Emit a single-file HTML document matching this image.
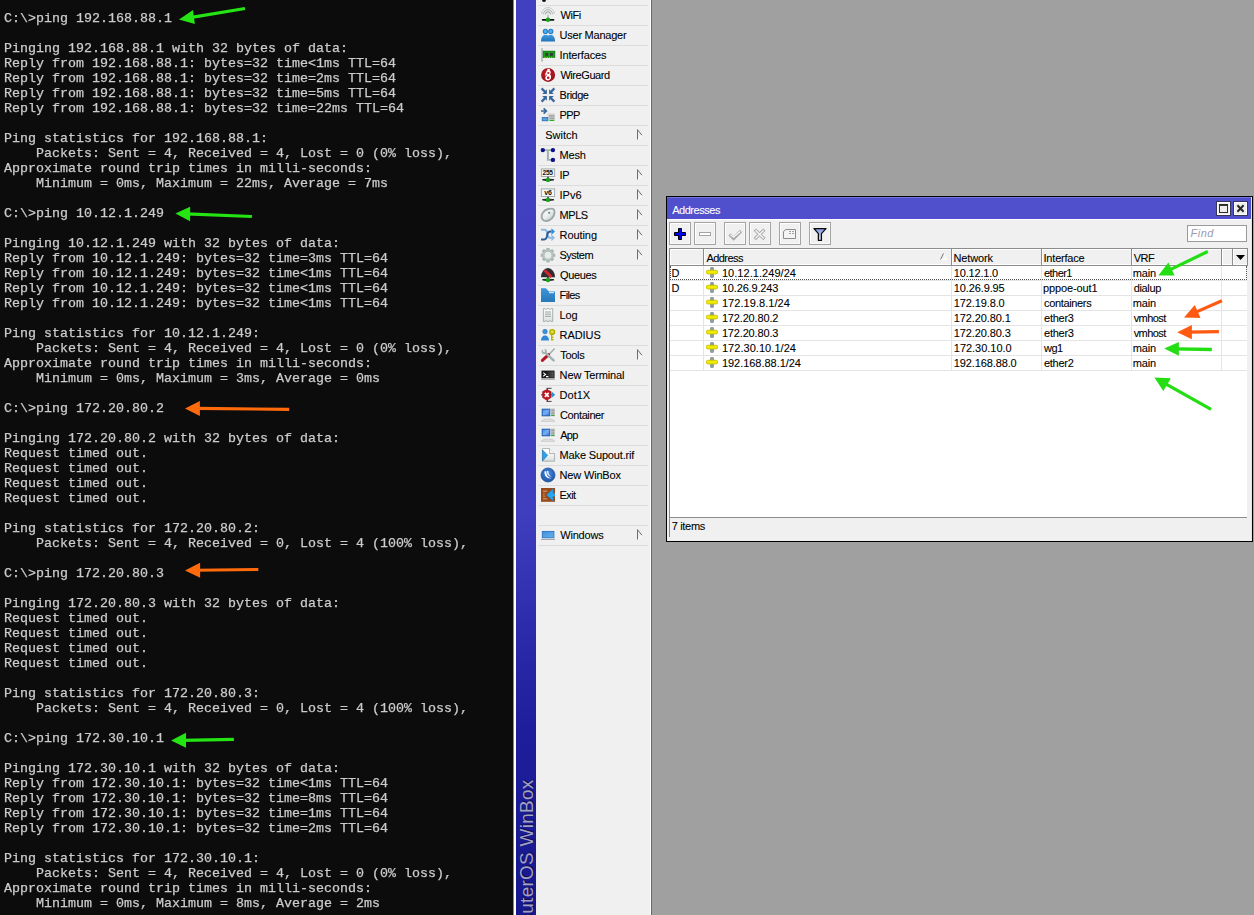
<!DOCTYPE html>
<html lang="en"><head><meta charset="utf-8"><title>ping / WinBox Addresses</title>
<style>
html,body{margin:0;padding:0;background:#a0a0a0}
body{width:1254px;height:915px;position:relative;overflow:hidden;background:#a0a0a0;font-family:"Liberation Sans",sans-serif;font-size:11px;color:#000;-webkit-text-stroke:0.09px #000}
#term{position:absolute;left:0;top:0;width:514px;height:915px;background:#0c0c0c;overflow:hidden}
#term pre{will-change:transform;position:absolute;left:4px;top:11px;margin:0;font-family:"Liberation Mono",monospace;font-size:13.333px;line-height:15px;color:#cccccc;white-space:pre;-webkit-text-stroke:0.25px #cccccc}
#wline{position:absolute;left:513px;top:0;width:3px;height:915px;background:linear-gradient(90deg,#8080c8 0,#8080c8 1px,#fffff8 1px)}
#bluebar{position:absolute;left:516px;top:0;width:20px;height:915px;background:linear-gradient(180deg,#4040c0 0,#3e3ebe 56%,#2c2cac 68%,#1e1e9c 80%,#17178e 100%);overflow:hidden}
#vtext{position:absolute;left:0;top:0;transform-origin:0 0;transform:translate(1px,938.5px) rotate(-90deg);letter-spacing:0.25px;font-size:19px;line-height:20px;height:20px;white-space:nowrap;color:#a2a2c0;-webkit-text-stroke:0;text-shadow:1px 1px 0 #0c0c54}
#menu{position:absolute;left:536px;top:0;width:114px;height:915px;background:#f0f0f0;overflow:hidden}
#menur{position:absolute;left:650px;top:0;width:2px;height:915px;background:linear-gradient(90deg,#fff 0,#fff 1px,#6a6a6a 1px)}
#work{position:absolute;left:652px;top:0;width:602px;height:915px;background:#a0a0a0}
.mi{position:absolute;left:2px;width:110px;height:20px;border-top:1px solid #dcdcdc;box-sizing:border-box}
.mi .ic{position:absolute;left:2px;top:1px;width:16px;height:16px;display:block}
.mi .ic svg{display:block}
.ml{position:absolute;top:2px;line-height:14px;font-size:11px;white-space:nowrap}
.sub{position:absolute;left:98px;top:3px}
.topdot{position:absolute;left:6px;top:-3px;width:4px;height:4.5px;border-radius:3px;background:#111}
#win{position:absolute;left:666px;top:196px;width:587px;height:346px;box-sizing:border-box;border:1px solid #000;background:#f0f0f0}
#title{position:absolute;left:0;top:0;width:584px;height:22px;background:#5050cc;border-top:1px solid #7474dc;box-sizing:border-box}
#ttext{position:absolute;top:5px;line-height:14px;color:#fff;font-size:11px;white-space:nowrap;-webkit-text-stroke:0.08px #fff}
#tline{position:absolute;left:0;top:22px;width:584px;height:1px;background:#fff}
#rstrip{position:absolute;left:584px;top:0;width:1px;height:344px;background:#e4e4e4}
.tb{position:absolute;top:3px;width:15px;height:15px;display:block}
.tb svg{display:block}
.btn{position:absolute;top:25px;width:22px;height:23px;box-sizing:border-box;border:1px solid #a4a4a4;background:#f0f0f0;box-shadow:inset 1px 1px 0 #fff,inset -1px -1px 0 #f8f8f8}
.btn svg{display:block;position:absolute;left:-1px;top:-1px}
#find{position:absolute;left:520px;top:28px;width:60px;height:17px;box-sizing:border-box;border:1px solid #9a9a9a;background:#fff}
#find i{position:absolute;top:1px;line-height:13px;color:#9a9ab0;font-size:11px;white-space:nowrap;-webkit-text-stroke:0}
#frame{position:absolute;left:2px;top:51px;width:579px;height:289px;box-sizing:border-box;border-left:1px solid #8c8c8c;border-top:1px solid #8c8c8c;background:#f0f0f0}
#thead{position:absolute;left:0;top:0;width:578px;height:16px;background:#f0f0f0;border-bottom:1px solid #8c8c8c}
.th{position:absolute;top:0;height:16px;box-sizing:border-box;border-right:1px solid #8c8c8c;box-shadow:inset 1px 1px 0 #fff,inset 0 -1px 0 #fff;overflow:hidden}
.tx{position:absolute;top:0;line-height:14px;font-size:11px;white-space:nowrap}
.th .tx{top:2px}
.sortm{position:absolute;left:270px;top:4px}
.dd{position:absolute;left:566px;top:6px}
#tbody{position:absolute;left:0;top:17px;width:577px;height:251px;background:#fff;border-bottom:1px solid #8c8c8c;overflow:hidden}
.tr{position:absolute;left:0;width:578px;height:15px;box-sizing:border-box;border-bottom:1px solid #e4e4e4}
.td{position:absolute;top:0;height:14px;box-sizing:border-box;border-right:1px solid #e4e4e4;overflow:hidden}
.td svg{position:absolute;left:2px;top:1px}
#sel{position:absolute;left:0;top:0;width:577px;height:14px;border:1px dotted #505050;border-top:0;box-sizing:border-box}
#status{position:absolute;left:0;top:269px;width:578px;height:19px}
#status .tx{top:1px;margin-left:0.5px}
#arrows{position:absolute;left:0;top:0;pointer-events:none}

</style></head>
<body>
<div id="term"><pre>C:\&gt;ping 192.168.88.1

Pinging 192.168.88.1 with 32 bytes of data:
Reply from 192.168.88.1: bytes=32 time&lt;1ms TTL=64
Reply from 192.168.88.1: bytes=32 time=2ms TTL=64
Reply from 192.168.88.1: bytes=32 time=5ms TTL=64
Reply from 192.168.88.1: bytes=32 time=22ms TTL=64

Ping statistics for 192.168.88.1:
    Packets: Sent = 4, Received = 4, Lost = 0 (0% loss),
Approximate round trip times in milli-seconds:
    Minimum = 0ms, Maximum = 22ms, Average = 7ms

C:\&gt;ping 10.12.1.249

Pinging 10.12.1.249 with 32 bytes of data:
Reply from 10.12.1.249: bytes=32 time=3ms TTL=64
Reply from 10.12.1.249: bytes=32 time&lt;1ms TTL=64
Reply from 10.12.1.249: bytes=32 time&lt;1ms TTL=64
Reply from 10.12.1.249: bytes=32 time&lt;1ms TTL=64

Ping statistics for 10.12.1.249:
    Packets: Sent = 4, Received = 4, Lost = 0 (0% loss),
Approximate round trip times in milli-seconds:
    Minimum = 0ms, Maximum = 3ms, Average = 0ms

C:\&gt;ping 172.20.80.2

Pinging 172.20.80.2 with 32 bytes of data:
Request timed out.
Request timed out.
Request timed out.
Request timed out.

Ping statistics for 172.20.80.2:
    Packets: Sent = 4, Received = 0, Lost = 4 (100% loss),

C:\&gt;ping 172.20.80.3

Pinging 172.20.80.3 with 32 bytes of data:
Request timed out.
Request timed out.
Request timed out.
Request timed out.

Ping statistics for 172.20.80.3:
    Packets: Sent = 4, Received = 0, Lost = 4 (100% loss),

C:\&gt;ping 172.30.10.1

Pinging 172.30.10.1 with 32 bytes of data:
Reply from 172.30.10.1: bytes=32 time&lt;1ms TTL=64
Reply from 172.30.10.1: bytes=32 time=8ms TTL=64
Reply from 172.30.10.1: bytes=32 time=1ms TTL=64
Reply from 172.30.10.1: bytes=32 time=2ms TTL=64

Ping statistics for 172.30.10.1:
    Packets: Sent = 4, Received = 4, Lost = 0 (0% loss),
Approximate round trip times in milli-seconds:
    Minimum = 0ms, Maximum = 8ms, Average = 2ms</pre></div>
<div id="wline"></div>
<div id="bluebar"><div id="vtext">RouterOS WinBox</div></div>
<div id="menu">
<div class="topdot"></div>
<div class="mi" style="top:5px"><span class="ic"><svg width="16" height="16" viewBox="0 0 16 16"><path d="M1.6 7A6.4 6.4 0 0 1 14.4 7" fill="none" stroke="#c4c8c8" stroke-width="1"/><path d="M3.5 7.2A4.5 4.5 0 0 1 12.5 7.2" fill="none" stroke="#a8b0b0" stroke-width="1"/><path d="M5.4 7.4A2.6 2.6 0 0 1 10.6 7.4" fill="none" stroke="#909898" stroke-width="1"/><rect x="7.4" y="7.5" width="1.2" height="4" fill="#a8b0b0"/><rect x="1.8" y="11.9" width="12.6" height="1.8" rx="0.9" fill="#111"/><circle cx="8" cy="12.8" r="2.2" fill="#12a812"/></svg></span><span class="ml" style="left:22.4px;letter-spacing:-0.37px">WiFi</span></div>
<div class="mi" style="top:25px"><span class="ic"><svg width="16" height="16" viewBox="0 0 16 16"><defs><linearGradient id="gu" x1="0" y1="0" x2="0" y2="1"><stop offset="0" stop-color="#3c9ce4"/><stop offset="1" stop-color="#2272b4"/></linearGradient></defs><path d="M1 14.6C1 10 3 7.8 5.4 7.8S8.2 9 8.1 9C8.1 9 8.4 7.8 10.7 7.8S15.1 10 15.1 14.6Z" fill="url(#gu)"/><circle cx="5.4" cy="4.4" r="2.1" fill="#48b0f0" stroke="#2a7cc4" stroke-width="1.1"/><circle cx="10.8" cy="4.4" r="2.1" fill="#48b0f0" stroke="#2a7cc4" stroke-width="1.1"/></svg></span><span class="ml" style="left:21.6px;letter-spacing:-0.25px">User Manager</span></div>
<div class="mi" style="top:45px"><span class="ic"><svg width="16" height="16" viewBox="0 0 16 16"><rect x="1.3" y="1.3" width="1.5" height="13.3" fill="#a8b2b2"/><rect x="3.2" y="4.2" width="11.6" height="6.3" fill="#12a012" stroke="#0a700a" stroke-width="0.8"/><rect x="5.4" y="6" width="2.6" height="2.8" fill="#3a3444"/><rect x="10" y="6" width="2.9" height="2.8" fill="#3a3444"/><path d="M4.5 10.6H14" stroke="#e8e020" stroke-width="0.9" stroke-dasharray="1 1.2"/></svg></span><span class="ml" style="left:21.6px;letter-spacing:-0.16px">Interfaces</span></div>
<div class="mi" style="top:65px"><span class="ic"><svg width="16" height="16" viewBox="0 0 16 16"><defs><radialGradient id="gw" cx="0.45" cy="0.4" r="0.6"><stop offset="0" stop-color="#c82028"/><stop offset="1" stop-color="#98101a"/></radialGradient></defs><circle cx="8.1" cy="7.9" r="7" fill="url(#gw)"/><path d="M7.2 1.9C9.6 1.6 10.6 2.8 9.6 3.6C11 4.4 11.2 6.4 9.9 7.4C11.8 8.6 11.6 12.8 8.2 13.4C5.2 13.6 4.6 10.6 6 9.2C4.8 8 5 6 6.4 5.2C6 4.2 6.6 3.4 7.6 3.2Z" fill="#fff"/><circle cx="8.3" cy="6" r="1.1" fill="#b81822"/><circle cx="8.2" cy="10.7" r="1.3" fill="#b81822"/><circle cx="6.4" cy="8" r="0.6" fill="#b81822"/></svg></span><span class="ml" style="left:22.4px;letter-spacing:-0.43px">WireGuard</span></div>
<div class="mi" style="top:85px"><span class="ic"><svg width="16" height="16" viewBox="0 0 16 16"><g><path d="M1.6 1.4L5.6 5.4" fill="none" stroke="#38689a" stroke-width="2.2"/><path d="M6.9 2.2V6.9H2.2Z" fill="#38689a"/></g><g transform="translate(16,0) scale(-1,1)"><path d="M1.6 1.4L5.6 5.4" fill="none" stroke="#38689a" stroke-width="2.2"/><path d="M6.9 2.2V6.9H2.2Z" fill="#38689a"/></g><g transform="translate(0,16) scale(1,-1)"><path d="M1.6 1.4L5.6 5.4" fill="none" stroke="#38689a" stroke-width="2.2"/><path d="M6.9 2.2V6.9H2.2Z" fill="#38689a"/></g><g transform="translate(16,16) scale(-1,-1)"><path d="M1.6 1.4L5.6 5.4" fill="none" stroke="#38689a" stroke-width="2.2"/><path d="M6.9 2.2V6.9H2.2Z" fill="#38689a"/></g></svg></span><span class="ml" style="left:21.6px;letter-spacing:-0.48px">Bridge</span></div>
<div class="mi" style="top:105px"><span class="ic"><svg width="16" height="16" viewBox="0 0 16 16"><path d="M1 4H6 M3.6 1.4L6.4 4L3.6 6.6" fill="none" stroke="#38689a" stroke-width="1.6"/><rect x="7.6" y="6.4" width="7.3" height="7.6" fill="#d4d4d4"/><rect x="9" y="8" width="5.4" height="1.6" fill="#a4a4a4"/><rect x="9.4" y="10.6" width="5" height="1" fill="#888"/><rect x="9.6" y="12.8" width="4.6" height="1.2" fill="#18b818"/><rect x="2.2" y="10.4" width="5.6" height="3.4" fill="#3a8ad0" stroke="#2a74bc" stroke-width="0.8"/><rect x="3.2" y="11.4" width="3.6" height="1.4" fill="#6ab0e8"/></svg></span><span class="ml" style="left:21.6px;letter-spacing:-0.65px">PPP</span></div>
<div class="mi" style="top:125px"><span class="ml" style="left:7.3px;letter-spacing:-0.02px">Switch</span><svg class="sub" width="7" height="12" viewBox="0 0 7 12"><path d="M6 6.6L2 10.4" stroke="#fff" stroke-width="1" fill="none"/><path d="M1.5 0.5V10.5 M1.5 0.8L6 6.2" stroke="#6c6c6c" stroke-width="1" fill="none"/></svg></div>
<div class="mi" style="top:145px"><span class="ic"><svg width="16" height="16" viewBox="0 0 16 16"><path d="M2.8 3.1H12.9 M7.9 3.1V12.9H12.9" fill="none" stroke="#a0b0b0" stroke-width="1.9"/><circle cx="2.8" cy="3.1" r="2.2" fill="#10108a"/><circle cx="12.9" cy="3.1" r="2.2" fill="#10108a"/><circle cx="12.9" cy="12.9" r="2.2" fill="#10108a"/></svg></span><span class="ml" style="left:21.6px;letter-spacing:-0.17px">Mesh</span></div>
<div class="mi" style="top:165px"><span class="ic"><svg width="16" height="16" viewBox="0 0 16 16"><rect x="1.4" y="1.9" width="13.2" height="7.6" fill="#f6f8f8" stroke="#a4acac" stroke-width="1"/><text x="2.6" y="8.2" font-family="Liberation Sans, sans-serif" font-weight="bold" font-size="6.6" letter-spacing="-0.3" fill="#111">255</text><rect x="7.3" y="9.8" width="1.4" height="2" fill="#222"/><path d="M2.4 12.8C5 12 11 12 14 12.8C11 13.8 5 13.8 2.4 12.8Z" fill="#111" stroke="#111" stroke-width="0.8"/><circle cx="8" cy="12.9" r="2.2" fill="#12a812"/></svg></span><span class="ml" style="left:21.6px;letter-spacing:-0.50px">IP</span><svg class="sub" width="7" height="12" viewBox="0 0 7 12"><path d="M6 6.6L2 10.4" stroke="#fff" stroke-width="1" fill="none"/><path d="M1.5 0.5V10.5 M1.5 0.8L6 6.2" stroke="#6c6c6c" stroke-width="1" fill="none"/></svg></div>
<div class="mi" style="top:185px"><span class="ic"><svg width="16" height="16" viewBox="0 0 16 16"><rect x="1.4" y="1.9" width="13.2" height="7.6" fill="#f6f8f8" stroke="#a4acac" stroke-width="1"/><text x="4.2" y="8.2" font-family="Liberation Sans, sans-serif" font-weight="bold" font-size="7" letter-spacing="0" fill="#111">v6</text><rect x="7.3" y="9.8" width="1.4" height="2" fill="#222"/><path d="M2.4 12.8C5 12 11 12 14 12.8C11 13.8 5 13.8 2.4 12.8Z" fill="#111" stroke="#111" stroke-width="0.8"/><circle cx="8" cy="12.9" r="2.2" fill="#12a812"/></svg></span><span class="ml" style="left:21.6px;letter-spacing:-0.03px">IPv6</span><svg class="sub" width="7" height="12" viewBox="0 0 7 12"><path d="M6 6.6L2 10.4" stroke="#fff" stroke-width="1" fill="none"/><path d="M1.5 0.5V10.5 M1.5 0.8L6 6.2" stroke="#6c6c6c" stroke-width="1" fill="none"/></svg></div>
<div class="mi" style="top:205px"><span class="ic"><svg width="16" height="16" viewBox="0 0 16 16"><defs><linearGradient id="gm" x1="0" y1="0" x2="1" y2="1"><stop offset="0" stop-color="#ffffff"/><stop offset="0.55" stop-color="#e6ecec"/><stop offset="1" stop-color="#aab6b6"/></linearGradient></defs><path d="M13 1.9C14.8 2.6 15 6 13.5 9.2C11.8 12.8 7.4 14.8 4.2 13.7C1.2 12.6 0.9 8.8 2.8 5.8C4.9 2.5 10 0.9 13 1.9Z" fill="url(#gm)" stroke="#9ca8a8" stroke-width="1.9"/><circle cx="9.2" cy="5.8" r="1.1" fill="#788484"/></svg></span><span class="ml" style="left:21.6px;letter-spacing:-0.47px">MPLS</span><svg class="sub" width="7" height="12" viewBox="0 0 7 12"><path d="M6 6.6L2 10.4" stroke="#fff" stroke-width="1" fill="none"/><path d="M1.5 0.5V10.5 M1.5 0.8L6 6.2" stroke="#6c6c6c" stroke-width="1" fill="none"/></svg></div>
<div class="mi" style="top:225px"><span class="ic"><svg width="16" height="16" viewBox="0 0 16 16"><path d="M1 2.8H4.6C7 2.8 7.2 5 7.4 7.6S8.6 11 11 11H11.6" fill="none" stroke="#8cb8e0" stroke-width="2"/><path d="M11.4 7.4L15 10.8L11.4 14.2Z" fill="#90b8e0"/><path d="M1 12.4H4.2C6.6 12.4 7 10.4 7.2 8S8.4 4.6 10.8 4.6H11.6" fill="none" stroke="#2c6098" stroke-width="2"/><path d="M11.4 1.2L15 4.6L11.4 8Z" fill="#2a90e0"/></svg></span><span class="ml" style="left:21.6px;letter-spacing:-0.08px">Routing</span><svg class="sub" width="7" height="12" viewBox="0 0 7 12"><path d="M6 6.6L2 10.4" stroke="#fff" stroke-width="1" fill="none"/><path d="M1.5 0.5V10.5 M1.5 0.8L6 6.2" stroke="#6c6c6c" stroke-width="1" fill="none"/></svg></div>
<div class="mi" style="top:245px"><span class="ic"><svg width="16" height="16" viewBox="0 0 16 16"><path d="M15.25 6.73L15.25 9.67L13.64 9.94L13.22 10.95L14.17 12.29L12.09 14.37L10.75 13.42L9.74 13.84L9.47 15.45L6.53 15.45L6.26 13.84L5.25 13.42L3.91 14.37L1.83 12.29L2.78 10.95L2.36 9.94L0.75 9.67L0.75 6.73L2.36 6.46L2.78 5.45L1.83 4.11L3.91 2.03L5.25 2.98L6.26 2.56L6.53 0.95L9.47 0.95L9.74 2.56L10.75 2.98L12.09 2.03L14.17 4.11L13.22 5.45L13.64 6.46Z" fill="#aab8b4"/><circle cx="8" cy="8.2" r="3.5" fill="#e6ecec"/><circle cx="8" cy="8.2" r="4.6" fill="none" stroke="#c2ccca" stroke-width="0.8"/></svg></span><span class="ml" style="left:21.4px;letter-spacing:-0.50px">System</span><svg class="sub" width="7" height="12" viewBox="0 0 7 12"><path d="M6 6.6L2 10.4" stroke="#fff" stroke-width="1" fill="none"/><path d="M1.5 0.5V10.5 M1.5 0.8L6 6.2" stroke="#6c6c6c" stroke-width="1" fill="none"/></svg></div>
<div class="mi" style="top:265px"><span class="ic"><svg width="16" height="16" viewBox="0 0 16 16"><path d="M1 10.2A7 9.2 0 0 1 15 10.2Z" fill="#2e2e2e"/><path d="M4.6 3.2L11.4 10" stroke="#d42432" stroke-width="3"/><rect x="7.3" y="10" width="1.4" height="2" fill="#222"/><path d="M2.4 12.8C5 12 11 12 14 12.8C11 13.8 5 13.8 2.4 12.8Z" fill="#111" stroke="#111" stroke-width="0.8"/><circle cx="8" cy="13" r="2.2" fill="#12a812"/></svg></span><span class="ml" style="left:22.0px;letter-spacing:-0.38px">Queues</span></div>
<div class="mi" style="top:285px"><span class="ic"><svg width="16" height="16" viewBox="0 0 16 16"><defs><linearGradient id="gf" x1="0" y1="0" x2="0" y2="1"><stop offset="0" stop-color="#3e94dc"/><stop offset="1" stop-color="#2878b8"/></linearGradient></defs><path d="M1 1.2H5.8L9 4.4H15V15H1Z" fill="url(#gf)"/><rect x="9" y="5.2" width="5" height="1" fill="#f4f8fc"/></svg></span><span class="ml" style="left:21.6px;letter-spacing:-0.67px">Files</span></div>
<div class="mi" style="top:305px"><span class="ic"><svg width="16" height="16" viewBox="0 0 16 16"><defs><linearGradient id="gl" x1="0" y1="0" x2="0" y2="1"><stop offset="0" stop-color="#ffffff"/><stop offset="1" stop-color="#d8e0de"/></linearGradient></defs><path d="M3.4 1.6H5L5.4 2.4H6.6L7 1.6H9L9.4 2.4H10.6L11 1.6H12.7V14.5H11L10.6 13.7H9.4L9 14.5H7L6.6 13.7H5.4L5 14.5H3.4Z" fill="url(#gl)" stroke="#a0aaa8" stroke-width="0.9"/><path d="M5 5H11M5 7.1H11M5 9.3H11" stroke="#98a4a0" stroke-width="1"/></svg></span><span class="ml" style="left:21.6px;letter-spacing:-0.20px">Log</span></div>
<div class="mi" style="top:325px"><span class="ic"><svg width="16" height="16" viewBox="0 0 16 16"><circle cx="5" cy="4.6" r="2.3" fill="#3890d8" stroke="#2a78bc" stroke-width="0.6"/><path d="M1 13.6C1 10.4 2.6 8.4 5 8.4S9 10.4 9 13.6Z" fill="#2e88d4"/><circle cx="12.2" cy="5" r="2.4" fill="#d4d420" stroke="#b0b000" stroke-width="1.4"/><rect x="11.2" y="4.2" width="2" height="1" fill="#f0e890"/><path d="M11.7 7.6V13.6 M11.7 10.4H13.4 M11.7 12.8H13.6" fill="none" stroke="#b8b800" stroke-width="1.4"/></svg></span><span class="ml" style="left:21.6px;letter-spacing:-0.08px">RADIUS</span></div>
<div class="mi" style="top:345px"><span class="ic"><svg width="16" height="16" viewBox="0 0 16 16"><path d="M14.2 2L8.4 8" stroke="#a0b0ac" stroke-width="1.6" stroke-linecap="round"/><path d="M8.6 7.6L2.4 13.4" stroke="#b41424" stroke-width="3" stroke-linecap="round"/><path d="M5 5.4L13.6 13.4" stroke="#a4b2b0" stroke-width="2.6" stroke-linecap="round"/><circle cx="4.2" cy="4.4" r="2.6" fill="#a4b2b0"/><path d="M4 4.4L1.6 1.6L5 1.4Z" fill="#f0f0f0"/><circle cx="4" cy="4" r="1.1" fill="#f0f0f0"/></svg></span><span class="ml" style="left:22.2px;letter-spacing:-0.27px">Tools</span><svg class="sub" width="7" height="12" viewBox="0 0 7 12"><path d="M6 6.6L2 10.4" stroke="#fff" stroke-width="1" fill="none"/><path d="M1.5 0.5V10.5 M1.5 0.8L6 6.2" stroke="#6c6c6c" stroke-width="1" fill="none"/></svg></div>
<div class="mi" style="top:365px"><span class="ic"><svg width="16" height="16" viewBox="0 0 16 16"><defs><linearGradient id="gt" x1="0" y1="0" x2="1" y2="0"><stop offset="0.3" stop-color="#141414"/><stop offset="1" stop-color="#585858"/></linearGradient></defs><rect x="1.9" y="4" width="12.2" height="6.9" fill="url(#gt)" stroke="#111" stroke-width="0.8"/><path d="M3.2 5.6L5.6 7.4L3.2 9.2 M6 9.6H8.4" fill="none" stroke="#fff" stroke-width="1.1"/><rect x="1" y="11.8" width="14" height="1" fill="#a4a4a4"/></svg></span><span class="ml" style="left:21.6px;letter-spacing:-0.14px">New Terminal</span></div>
<div class="mi" style="top:385px"><span class="ic"><svg width="16" height="16" viewBox="0 0 16 16"><path d="M6.4 1.3H11.6 M6.4 14.4H11.6 M7.5 1.3V3 M7.5 12.8V14.4" fill="none" stroke="#444" stroke-width="1"/><path d="M1 7.8H3 M11 7.8H12" stroke="#2a90d8" stroke-width="1.6"/><path d="M11.6 4.6L15.2 7.8L11.6 11Z" fill="#2a90d8"/><path d="M6.8 2.6L11 4.6V10.6L6.8 13.2L2.6 10.6V4.6Z" fill="#c01420" stroke="#a01018" stroke-width="0.6"/><path d="M4.9 5.8L8.7 9.8M8.7 5.8L4.9 9.8" stroke="#fff" stroke-width="1.7"/></svg></span><span class="ml" style="left:21.6px;letter-spacing:0.00px">Dot1X</span></div>
<div class="mi" style="top:405px"><span class="ic"><svg width="16" height="16" viewBox="0 0 16 16"><defs><linearGradient id="gc" x1="0" y1="0" x2="1" y2="1"><stop offset="0" stop-color="#3c88e0"/><stop offset="0.5" stop-color="#78b0f0"/><stop offset="1" stop-color="#2a6cd0"/></linearGradient></defs><rect x="2.2" y="2.2" width="7.6" height="6.6" fill="url(#gc)" stroke="#1c5cb0" stroke-width="1"/><rect x="10.8" y="1.5" width="4" height="7.8" fill="#c0c0c0"/><rect x="11.4" y="2.6" width="3" height="1.6" fill="#a0a0a0"/><rect x="11.4" y="5.6" width="3" height="0.9" fill="#8a8a8a"/><rect x="11.2" y="7.9" width="3.2" height="1.1" fill="#18b818"/><path d="M1.2 14.3C3 11.2 12.6 11.2 14.8 14.3Z" fill="#e4e4e4" stroke="#c4c4c4" stroke-width="0.8"/></svg></span><span class="ml" style="left:22.0px;letter-spacing:-0.40px">Container</span></div>
<div class="mi" style="top:425px"><span class="ic"><svg width="16" height="16" viewBox="0 0 16 16"><defs><linearGradient id="gc2" x1="0" y1="0" x2="1" y2="1"><stop offset="0" stop-color="#3c88e0"/><stop offset="0.5" stop-color="#78b0f0"/><stop offset="1" stop-color="#2a6cd0"/></linearGradient></defs><rect x="2.2" y="2.2" width="7.6" height="6.6" fill="url(#gc2)" stroke="#1c5cb0" stroke-width="1"/><rect x="10.8" y="1.5" width="4" height="7.8" fill="#c0c0c0"/><rect x="11.4" y="2.6" width="3" height="1.6" fill="#a0a0a0"/><rect x="11.4" y="5.6" width="3" height="0.9" fill="#8a8a8a"/><rect x="11.2" y="7.9" width="3.2" height="1.1" fill="#18b818"/><path d="M1.2 14.3C3 11.2 12.6 11.2 14.8 14.3Z" fill="#e4e4e4" stroke="#c4c4c4" stroke-width="0.8"/></svg></span><span class="ml" style="left:22.2px;letter-spacing:-0.70px">App</span></div>
<div class="mi" style="top:445px"><span class="ic"><svg width="16" height="16" viewBox="0 0 16 16"><defs><linearGradient id="gs" x1="0" y1="0" x2="0" y2="1"><stop offset="0.3" stop-color="#ffffff"/><stop offset="1" stop-color="#d4dcdc"/></linearGradient></defs><path d="M2.4 1.6H9.6L14.6 6.6V14.2H2.4Z" fill="url(#gs)" stroke="#a4aeac" stroke-width="0.9"/><path d="M9.6 1.6V6.6H14.6" fill="#f8fafa" stroke="#a4aeac" stroke-width="0.9"/><path d="M2.5 3L7.6 8.3L2.5 14Z" fill="#2aa4ec" stroke="#2478b8" stroke-width="0.7"/></svg></span><span class="ml" style="left:21.6px;letter-spacing:-0.16px">Make Supout.rif</span></div>
<div class="mi" style="top:465px"><span class="ic"><svg width="16" height="16" viewBox="0 0 16 16"><defs><radialGradient id="gb" cx="0.5" cy="0.4" r="0.6"><stop offset="0" stop-color="#4a8cec"/><stop offset="0.55" stop-color="#306cc4"/><stop offset="1" stop-color="#22549c"/></radialGradient></defs><circle cx="8" cy="8" r="7" fill="url(#gb)" stroke="#24589c" stroke-width="0.8"/><path d="M4.6 4.2C4 8.6 6.8 11.8 11.6 11.4C8 10.4 6 8 6.4 4.2Z" fill="#fff"/><path d="M7 4C6.8 7.2 8.6 9.6 11.8 10C9.4 8.8 8.4 6.8 8.4 4Z" fill="#e4eefc"/></svg></span><span class="ml" style="left:21.6px;letter-spacing:-0.18px">New WinBox</span></div>
<div class="mi" style="top:485px"><span class="ic"><svg width="16" height="16" viewBox="0 0 16 16"><rect x="1" y="1" width="14" height="13.8" fill="#9a4a18"/><path d="M3 3.4H8L6.6 5H3Z M3 6.4H5.4L4.6 7.6H3Z M3 8.6H4.8L5.6 9.8H3Z M3 11H6.4L7.6 12.6H3Z" fill="#cc8858"/><path d="M6.6 7.9L13 1.8V14Z" fill="#2aa4ec" stroke="#2280c8" stroke-width="0.6"/><rect x="12" y="6.4" width="3" height="3" fill="#2aa4ec"/></svg></span><span class="ml" style="left:21.6px;letter-spacing:-0.63px">Exit</span></div>
<div class="mi" style="top:505px"></div>
<div class="mi" style="top:525px"><span class="ic"><svg width="16" height="16" viewBox="0 0 16 16"><defs><linearGradient id="gwn" x1="0" y1="0" x2="1" y2="1"><stop offset="0" stop-color="#4090dc"/><stop offset="1" stop-color="#68b0ec"/></linearGradient></defs><rect x="2.3" y="4.4" width="11.6" height="6.4" fill="url(#gwn)" stroke="#2a74c4" stroke-width="0.9"/><rect x="1" y="12" width="14" height="1" fill="#a8a8a8"/></svg></span><span class="ml" style="left:22.2px;letter-spacing:-0.18px">Windows</span><svg class="sub" width="7" height="12" viewBox="0 0 7 12"><path d="M6 6.6L2 10.4" stroke="#fff" stroke-width="1" fill="none"/><path d="M1.5 0.5V10.5 M1.5 0.8L6 6.2" stroke="#6c6c6c" stroke-width="1" fill="none"/></svg></div>
<div class="mi" style="top:545px"></div>
</div>
<div id="menur"></div>
<div id="work"></div>
<div id="win">
<div id="title"><span id="ttext" style="left:5.2px;letter-spacing:-0.47px">Addresses</span><span class="tb" style="left:549px"><svg width="15" height="15" viewBox="0 0 15 15"><rect x="0.5" y="0.5" width="14" height="14" fill="#fff" stroke="#34345c"/><rect x="2" y="2" width="11" height="11" fill="#eeeeee"/><rect x="3.5" y="4" width="8" height="7.5" fill="none" stroke="#303030"/><rect x="3" y="3" width="9" height="2" fill="#303030"/></svg></span><span class="tb" style="left:566px"><svg width="15" height="15" viewBox="0 0 15 15"><rect x="0.5" y="0.5" width="14" height="14" fill="#fff" stroke="#34345c"/><rect x="2" y="2" width="11" height="11" fill="#eeeeee"/><path d="M4.4 4.2L10.6 10.8M10.6 4.2L4.4 10.8" stroke="#282828" stroke-width="2"/></svg></span></div>
<div id="tline"></div><div id="rstrip"></div>
<span class="btn" style="left:2px"><svg width="22" height="23" viewBox="0 0 22 23"><path d="M9.5 6.5H12.5V10.5H16.5V13.5H12.5V17.5H9.5V13.5H5.5V10.5H9.5Z" fill="#0000ff" stroke="#000" stroke-width="1"/></svg></span><span class="btn" style="left:27px"><svg width="22" height="23" viewBox="0 0 22 23"><rect x="5.5" y="10.5" width="11" height="3" fill="#fff" stroke="#a4a4a4"/></svg></span><span class="btn" style="left:57px"><svg width="22" height="23" viewBox="0 0 22 23"><path d="M5.6 12.4L9.6 16.4L17 9" fill="none" stroke="#a8a8a8" stroke-width="3.2"/><path d="M6.4 12.6L9.6 15.2L16.2 9.4" fill="none" stroke="#f6f6f6" stroke-width="1.4"/></svg></span><span class="btn" style="left:82px"><svg width="22" height="23" viewBox="0 0 22 23"><path d="M5.8 7.6L15.4 17M15.4 7.6L5.8 17" fill="none" stroke="#a8a8a8" stroke-width="3.2"/><path d="M6.4 8.2L14.8 16.4M14.8 8.2L6.4 16.4" fill="none" stroke="#f6f6f6" stroke-width="1.4"/></svg></span><span class="btn" style="left:112px"><svg width="22" height="23" viewBox="0 0 22 23"><path d="M4.5 16.5V9.5L7 7.5H16.5V16.5Z" fill="#f4f4f4" stroke="#8c8c8c"/><path d="M10 9.5H12M13 9.5H15M10 11.5H12M13 11.5H15" stroke="#a0a0a0"/></svg></span><span class="btn" style="left:142px"><svg width="22" height="23" viewBox="0 0 22 23"><defs><linearGradient id="gfl" x1="0" y1="0" x2="0" y2="1"><stop offset="0" stop-color="#8098e8"/><stop offset="1" stop-color="#e4eaff"/></linearGradient></defs><path d="M5 6.6H17L12.4 11.6V18.4H9.4V11.6Z" fill="url(#gfl)" stroke="#0a0a0a" stroke-width="1.3" stroke-linejoin="round"/></svg></span><span id="find"><i style="left:2.6px;letter-spacing:0.50px">Find</i></span>
<div id="frame">
<div id="thead"><span class="th" style="left:0px;width:34px"></span><span class="th" style="left:34px;width:248px"><span class="tx" style="left:2.4px;letter-spacing:-0.53px">Address</span></span><span class="th" style="left:282px;width:90px"><span class="tx" style="left:1.6px;letter-spacing:-0.17px">Network</span></span><span class="th" style="left:372px;width:90px"><span class="tx" style="left:1.5px;letter-spacing:-0.20px">Interface</span></span><span class="th" style="left:462px;width:90px"><span class="tx" style="left:1.7px;letter-spacing:-0.50px">VRF</span></span><span class="th" style="left:552px;width:11px"></span><span class="th" style="left:563px;width:15px"></span><svg class="sortm" width="7" height="7" viewBox="0 0 7 7"><path d="M3.5 0.5L6.5 6.5H0.5" stroke="#fff" stroke-width="1" fill="none"/><path d="M0.5 6.5L3.5 0.5" stroke="#777" stroke-width="1" fill="none"/></svg><svg class="dd" width="9" height="5" viewBox="0 0 9 5"><path d="M0 0H9L4.5 5Z" fill="#000"/></svg></div>
<div id="tbody">
<div class="tr" style="top:0px"><span class="td" style="left:0;width:34px"><span class="tx" style="left:1.6px;letter-spacing:0.00px">D</span></span><span class="td" style="left:34px;width:248px"><svg width="12" height="12" viewBox="0 0 12 12"><rect x="4" y="0" width="4" height="11" rx="1.4" fill="#909ca4"/><rect x="0.2" y="3.2" width="11.6" height="3.8" rx="1.9" fill="#f0ec00" stroke="#c4bc00" stroke-width="0.8"/></svg><span class="tx" style="left:17.9px;letter-spacing:0.05px">10.12.1.249/24</span></span><span class="td" style="left:282px;width:90px"><span class="tx" style="left:1.8px;letter-spacing:-0.18px">10.12.1.0</span></span><span class="td" style="left:372px;width:90px"><span class="tx" style="left:2.0px;letter-spacing:-0.54px">ether1</span></span><span class="td" style="left:462px;width:90px"><span class="tx" style="left:0.7px;letter-spacing:-0.17px">main</span></span><span class="td" style="left:552px;width:26px;border-right:0"></span></div>
<div class="tr" style="top:15px"><span class="td" style="left:0;width:34px"><span class="tx" style="left:1.6px;letter-spacing:0.00px">D</span></span><span class="td" style="left:34px;width:248px"><svg width="12" height="12" viewBox="0 0 12 12"><rect x="4" y="0" width="4" height="11" rx="1.4" fill="#909ca4"/><rect x="0.2" y="3.2" width="11.6" height="3.8" rx="1.9" fill="#f0ec00" stroke="#c4bc00" stroke-width="0.8"/></svg><span class="tx" style="left:17.9px;letter-spacing:-0.16px">10.26.9.243</span></span><span class="td" style="left:282px;width:90px"><span class="tx" style="left:1.8px;letter-spacing:-0.12px">10.26.9.95</span></span><span class="td" style="left:372px;width:90px"><span class="tx" style="left:1.0px;letter-spacing:-0.12px">pppoe-out1</span></span><span class="td" style="left:462px;width:90px"><span class="tx" style="left:1.7px;letter-spacing:-0.34px">dialup</span></span><span class="td" style="left:552px;width:26px;border-right:0"></span></div>
<div class="tr" style="top:30px"><span class="td" style="left:0;width:34px"></span><span class="td" style="left:34px;width:248px"><svg width="12" height="12" viewBox="0 0 12 12"><rect x="4" y="0" width="4" height="11" rx="1.4" fill="#909ca4"/><rect x="0.2" y="3.2" width="11.6" height="3.8" rx="1.9" fill="#f0ec00" stroke="#c4bc00" stroke-width="0.8"/></svg><span class="tx" style="left:17.9px;letter-spacing:0.06px">172.19.8.1/24</span></span><span class="td" style="left:282px;width:90px"><span class="tx" style="left:1.8px;letter-spacing:-0.12px">172.19.8.0</span></span><span class="td" style="left:372px;width:90px"><span class="tx" style="left:2.0px;letter-spacing:-0.34px">containers</span></span><span class="td" style="left:462px;width:90px"><span class="tx" style="left:0.7px;letter-spacing:-0.17px">main</span></span><span class="td" style="left:552px;width:26px;border-right:0"></span></div>
<div class="tr" style="top:45px"><span class="td" style="left:0;width:34px"></span><span class="td" style="left:34px;width:248px"><svg width="12" height="12" viewBox="0 0 12 12"><rect x="4" y="0" width="4" height="11" rx="1.4" fill="#909ca4"/><rect x="0.2" y="3.2" width="11.6" height="3.8" rx="1.9" fill="#f0ec00" stroke="#c4bc00" stroke-width="0.8"/></svg><span class="tx" style="left:17.9px;letter-spacing:-0.16px">172.20.80.2</span></span><span class="td" style="left:282px;width:90px"><span class="tx" style="left:1.8px;letter-spacing:-0.10px">172.20.80.1</span></span><span class="td" style="left:372px;width:90px"><span class="tx" style="left:2.0px;letter-spacing:-0.24px">ether3</span></span><span class="td" style="left:462px;width:90px"><span class="tx" style="left:1.7px;letter-spacing:-0.58px">vmhost</span></span><span class="td" style="left:552px;width:26px;border-right:0"></span></div>
<div class="tr" style="top:60px"><span class="td" style="left:0;width:34px"></span><span class="td" style="left:34px;width:248px"><svg width="12" height="12" viewBox="0 0 12 12"><rect x="4" y="0" width="4" height="11" rx="1.4" fill="#909ca4"/><rect x="0.2" y="3.2" width="11.6" height="3.8" rx="1.9" fill="#f0ec00" stroke="#c4bc00" stroke-width="0.8"/></svg><span class="tx" style="left:17.9px;letter-spacing:-0.16px">172.20.80.3</span></span><span class="td" style="left:282px;width:90px"><span class="tx" style="left:1.8px;letter-spacing:-0.10px">172.20.80.3</span></span><span class="td" style="left:372px;width:90px"><span class="tx" style="left:2.0px;letter-spacing:-0.24px">ether3</span></span><span class="td" style="left:462px;width:90px"><span class="tx" style="left:1.7px;letter-spacing:-0.58px">vmhost</span></span><span class="td" style="left:552px;width:26px;border-right:0"></span></div>
<div class="tr" style="top:75px"><span class="td" style="left:0;width:34px"></span><span class="td" style="left:34px;width:248px"><svg width="12" height="12" viewBox="0 0 12 12"><rect x="4" y="0" width="4" height="11" rx="1.4" fill="#909ca4"/><rect x="0.2" y="3.2" width="11.6" height="3.8" rx="1.9" fill="#f0ec00" stroke="#c4bc00" stroke-width="0.8"/></svg><span class="tx" style="left:17.9px;letter-spacing:0.05px">172.30.10.1/24</span></span><span class="td" style="left:282px;width:90px"><span class="tx" style="left:1.8px;letter-spacing:-0.03px">172.30.10.0</span></span><span class="td" style="left:372px;width:90px"><span class="tx" style="left:2.0px;letter-spacing:-0.50px">wg1</span></span><span class="td" style="left:462px;width:90px"><span class="tx" style="left:0.7px;letter-spacing:-0.17px">main</span></span><span class="td" style="left:552px;width:26px;border-right:0"></span></div>
<div class="tr" style="top:90px"><span class="td" style="left:0;width:34px"></span><span class="td" style="left:34px;width:248px"><svg width="12" height="12" viewBox="0 0 12 12"><rect x="4" y="0" width="4" height="11" rx="1.4" fill="#909ca4"/><rect x="0.2" y="3.2" width="11.6" height="3.8" rx="1.9" fill="#f0ec00" stroke="#c4bc00" stroke-width="0.8"/></svg><span class="tx" style="left:17.9px;letter-spacing:-0.03px">192.168.88.1/24</span></span><span class="td" style="left:282px;width:90px"><span class="tx" style="left:1.8px;letter-spacing:-0.12px">192.168.88.0</span></span><span class="td" style="left:372px;width:90px"><span class="tx" style="left:2.0px;letter-spacing:-0.28px">ether2</span></span><span class="td" style="left:462px;width:90px"><span class="tx" style="left:0.7px;letter-spacing:-0.17px">main</span></span><span class="td" style="left:552px;width:26px;border-right:0"></span></div>
<div id="sel"></div>
</div>
<div id="status"><span class="tx" style="left:1.2px;letter-spacing:-0.32px">7 items</span></div>
</div>
</div>
<svg id="arrows" width="1254" height="915" viewBox="0 0 1254 915">
<path d="M245.0 8.5L190.2 17.6" stroke="#24e414" stroke-width="3.2" fill="none"/><path d="M179.0 19.4L193.0 10.0L194.8 24.0Z" fill="#24e414"/>
<path d="M251.9 216.5L186.4 213.9" stroke="#24e414" stroke-width="3.1" fill="none"/><path d="M175.4 213.5L190.1 206.8L190.1 221.3Z" fill="#24e414"/>
<path d="M289.2 409.4L196.2 408.4" stroke="#ff6a0c" stroke-width="3.1" fill="none"/><path d="M185.0 408.4L199.9 401.0L199.9 415.9Z" fill="#ff6a0c"/>
<path d="M258.3 569.5L196.3 570.2" stroke="#ff6a0c" stroke-width="3.1" fill="none"/><path d="M185.0 570.4L200.1 562.7L200.1 577.7Z" fill="#ff6a0c"/>
<path d="M233.9 739.4L182.3 740.3" stroke="#24e414" stroke-width="3.3" fill="none"/><path d="M171.1 740.5L186.0 732.8L186.0 747.7Z" fill="#24e414"/>
<path d="M1207.8 251.5L1168.2 270.6" stroke="#22de12" stroke-width="3.2" fill="none"/><path d="M1158.3 275.4L1168.4 262.5L1174.6 275.4Z" fill="#22de12"/>
<path d="M1221.9 300.7L1194.2 312.9" stroke="#ff5a12" stroke-width="3.2" fill="none"/><path d="M1184.0 317.5L1194.8 304.9L1200.5 317.9Z" fill="#ff5a12"/>
<path d="M1218.9 331.7L1188.2 332.2" stroke="#ff5a12" stroke-width="3.2" fill="none"/><path d="M1177.2 332.2L1191.9 325.0L1191.9 339.3Z" fill="#ff5a12"/>
<path d="M1211.8 349.5L1175.2 348.8" stroke="#22de12" stroke-width="3.3" fill="none"/><path d="M1164.2 348.5L1178.9 341.9L1178.9 355.8Z" fill="#22de12"/>
<path d="M1211.1 409.4L1163.9 382.9" stroke="#22de12" stroke-width="3.3" fill="none"/><path d="M1154.4 377.5L1170.9 378.3L1163.3 391.0Z" fill="#22de12"/>
</svg>
</body></html>
